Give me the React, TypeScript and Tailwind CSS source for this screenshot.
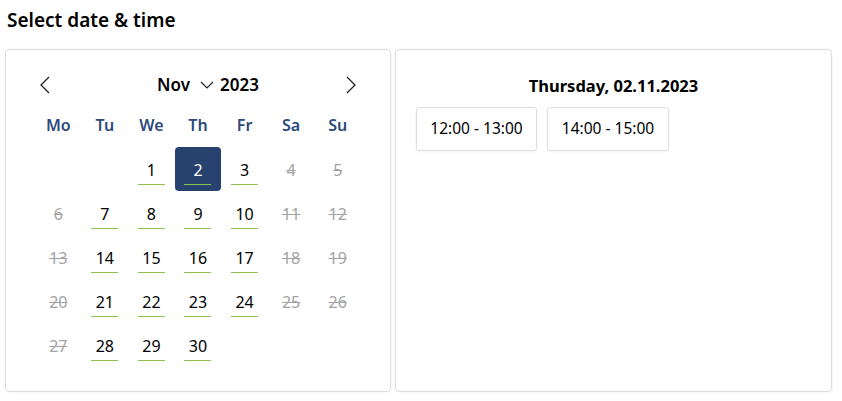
type Day = { n: number; state: "blank" | "open" | "off" | "selected" };

const weekdays = ["Mo", "Tu", "We", "Th", "Fr", "Sa", "Su"];

// Nov 2023 starts on a Wednesday
const days: Day[] = [
  { n: 0, state: "blank" },
  { n: 0, state: "blank" },
  ...Array.from({ length: 30 }, (_, i): Day => {
    const n = i + 1;
    const dow = (i + 2) % 7; // 0 = Mo
    if (n === 2) return { n, state: "selected" };
    if (dow >= 5 || n === 6 || n === 13 || n === 20 || n === 27) return { n, state: "off" };
    return { n, state: "open" };
  }),
];

function DayCell({ day }: { day: Day }) {
  if (day.state === "blank") return <div className="h-[44px]" />;
  if (day.state === "off") {
    return (
      <div className="h-[44px] flex justify-center pt-[14px] text-[16px] leading-[18px] text-[#a3a3a3] line-through">
        {day.n}
      </div>
    );
  }
  const selected = day.state === "selected";
  return (
    <div
      className={`h-[44px] flex flex-col items-center pt-[14px] rounded-[4px] ${
        selected ? "bg-[#27426f] text-white" : "text-black"
      }`}
    >
      <span className="text-[16px] leading-[18px]">{day.n}</span>
      <div className="mt-[5px] w-[27px] border-t border-[#8dc04e]" />
    </div>
  );
}

function Chevron({ dir }: { dir: "left" | "right" }) {
  return (
    <svg width="12" height="18" viewBox="0 0 12 18" fill="none" stroke="#222" strokeWidth="1.3">
      {dir === "left" ? <path d="M10 1 L2 9 L10 17" /> : <path d="M2 1 L10 9 L2 17" />}
    </svg>
  );
}

export default function App() {
  return (
    <div className="w-[842px] h-[401px] bg-white font-['Noto_Sans',sans-serif] text-black">
      <h1 className="pl-[7px] pt-[7px] h-[49px] text-[19px] leading-[26px] font-semibold">
        Select date &amp; time
      </h1>
      <div className="flex gap-[4px] pl-[5px]">
        <div className="w-[386px] h-[343px] border border-[#dedede] rounded-[4px] shadow-[0_0_3px_rgba(0,0,0,0.06)] pt-[20px] px-[29px]">
          <div className="flex items-center h-[30px] pl-[4px] pr-[4px]">
            <Chevron dir="left" />
            <div className="flex-1 flex items-center justify-center pl-[20px] text-[17px] font-semibold">
              <span>Nov</span>
              <svg className="ml-[10px] mr-[6px]" width="14" height="8" viewBox="0 0 14 8" fill="none" stroke="#222" strokeWidth="1.2">
                <path d="M1 1 L7 7 L13 1" />
              </svg>
              <span>2023</span>
            </div>
            <Chevron dir="right" />
          </div>
          <div className="grid grid-cols-7 mt-[3px]">
            {weekdays.map((w) => (
              <div
                key={w}
                className="h-[44px] flex items-center justify-center text-[16px] font-semibold text-[#2c4a7c]"
              >
                {w}
              </div>
            ))}
            {days.map((d, i) => (
              <DayCell key={i} day={d} />
            ))}
          </div>
        </div>
        <div className="w-[437px] h-[343px] border border-[#dedede] rounded-[4px] shadow-[0_0_3px_rgba(0,0,0,0.06)] pt-[24px] px-[20px]">
          <div className="text-center text-[16.5px] font-bold leading-[24px]">
            Thursday, 02.11.2023
          </div>
          <div className="flex gap-[10px] mt-[9px]">
            <button className="w-[121px] h-[44px] border border-[#dedede] rounded-[3px] text-[15.5px] shadow-[0_1px_3px_rgba(0,0,0,0.05)]">
              12:00 - 13:00
            </button>
            <button className="w-[122px] h-[44px] border border-[#dedede] rounded-[3px] text-[15.5px] shadow-[0_1px_3px_rgba(0,0,0,0.05)]">
              14:00 - 15:00
            </button>
          </div>
        </div>
      </div>
    </div>
  );
}
